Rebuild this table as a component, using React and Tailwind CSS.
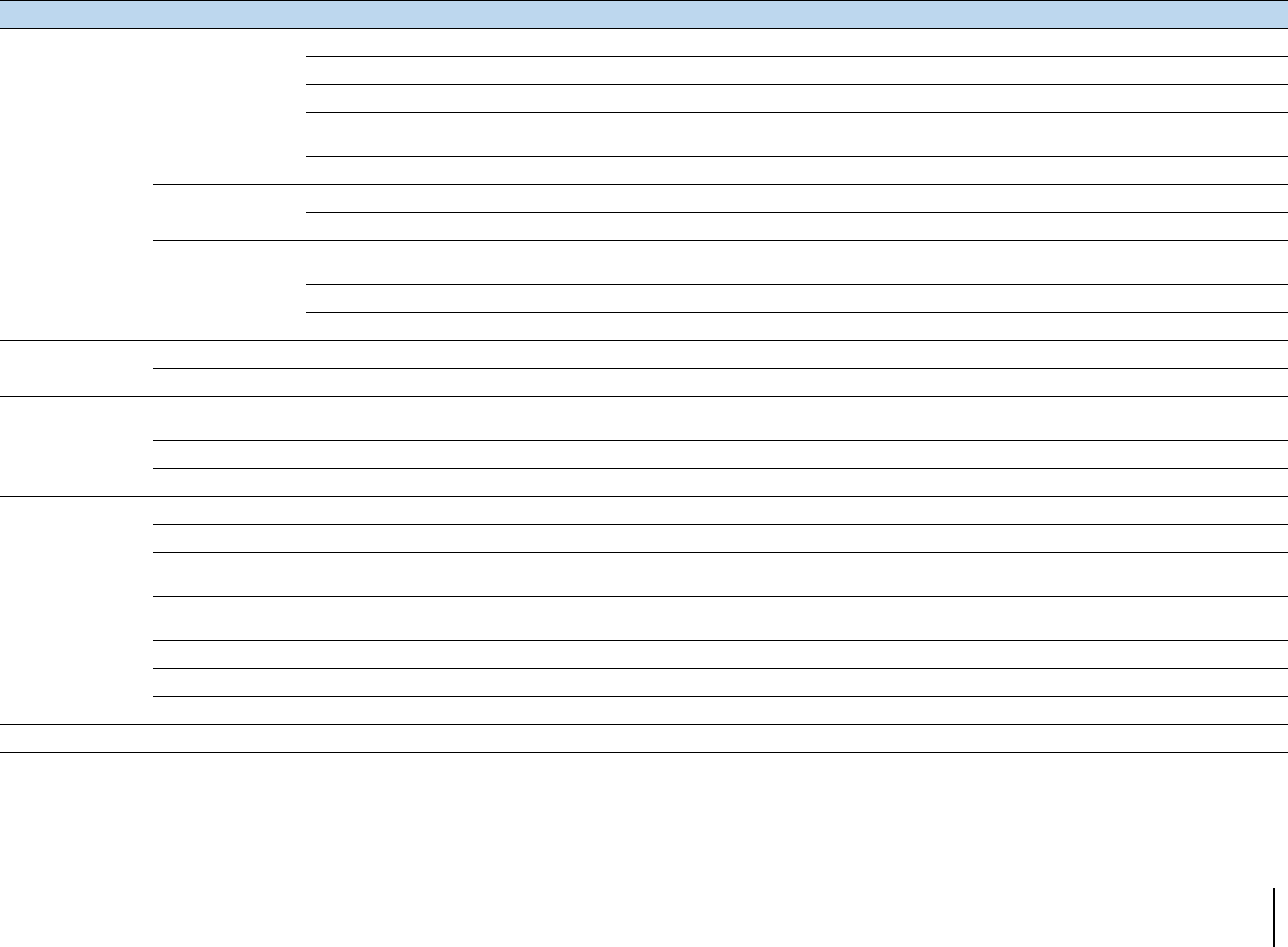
// Blank spec sheet grid — merged-cell table with a blue header band and a page marker.

const groups = [
  {
    height: 312,
    subs: [
      { height: 156, rows: [28, 28, 28, 44, 28] },
      { height: 56, rows: [28, 28] },
      { height: 100, rows: [44, 28, 28] },
    ],
  },
  { height: 56, rows: [28, 28] },
  { height: 100, rows: [44, 28, 28] },
  { height: 228, rows: [28, 28, 44, 44, 28, 28, 28] },
];

function Rows({ rows }) {
  return (
    <div className="flex-1 flex flex-col">
      {rows.map((h, i) => (
        <div key={i} className="border-b border-black" style={{ height: h }} />
      ))}
    </div>
  );
}

export default function App() {
  return (
    <div className="w-full bg-white font-['Liberation_Sans',sans-serif]">
      <div className="h-[29px] border-y border-black bg-[#bdd7ee]" />

      {groups.map((g, gi) => (
        <div key={gi} className="flex">
          <div className="w-[153px] border-b border-black" style={{ height: g.height }} />
          {g.subs ? (
            <div className="flex-1 flex flex-col">
              {g.subs.map((s, si) => (
                <div key={si} className="flex">
                  <div className="w-[153px] border-b border-black" style={{ height: s.height }} />
                  <Rows rows={s.rows} />
                </div>
              ))}
            </div>
          ) : (
            <Rows rows={g.rows} />
          )}
        </div>
      ))}

      <div className="h-[28px] border-b border-black" />

      <div className="flex justify-end pr-[13px] pt-[135px]">
        <div className="w-[2px] h-[59px] bg-black" />
      </div>
    </div>
  );
}
